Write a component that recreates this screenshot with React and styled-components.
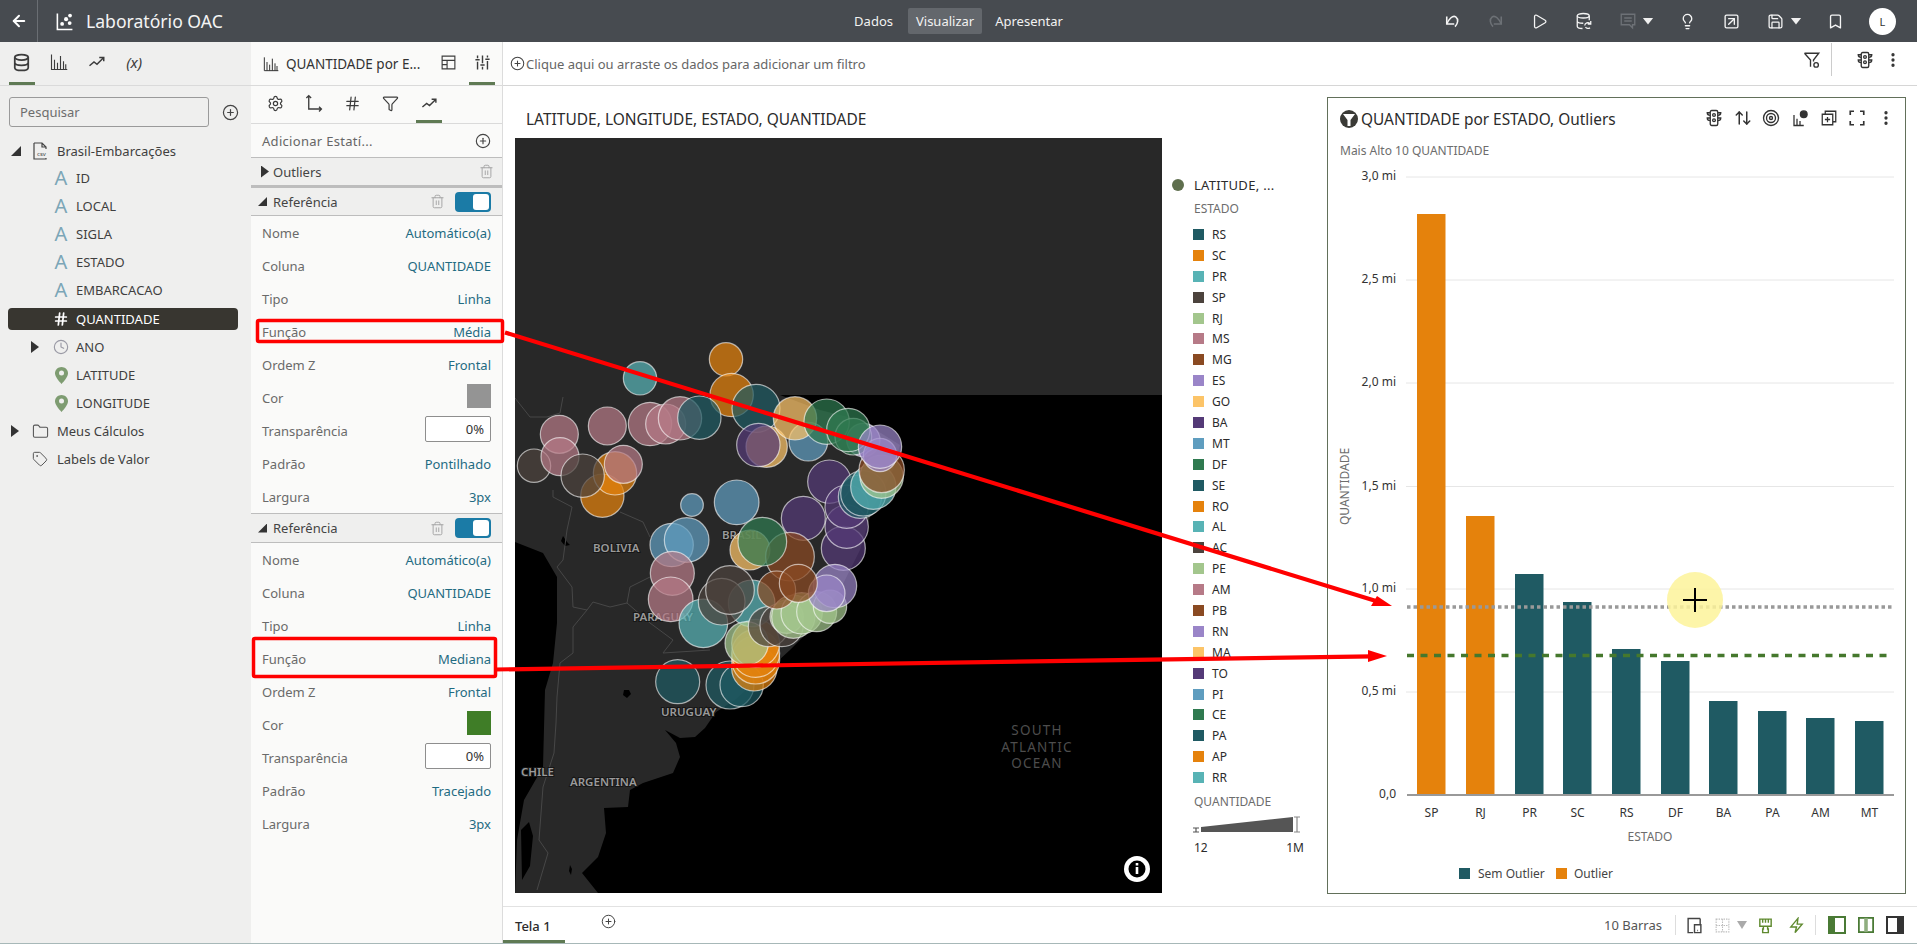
import React from "react";
import styled, { createGlobalStyle } from "styled-components";
import {
  ArrowLeft, CirclePlus, Settings, Hash, Funnel, Trash2, Clock, Folder, Tag,
  Play, Lightbulb, Bookmark, Save, SquareArrowUpRight, EllipsisVertical,
  ArrowUpDown, Target,
} from "lucide-react";

const Global = createGlobalStyle`
  html, body { margin: 0; padding: 0; height: 100%; overflow: hidden; background: #fff; }
  body { font-family: "Noto Sans", "Open Sans", sans-serif; font-size: 13px; color: #333; }
  * { box-sizing: border-box; }
`;

const Root = styled.div`
  position: relative; width: 1917px; height: 944px; display: flex; flex-direction: column;
  overflow: hidden; border-bottom: 1px solid #a7b8b8;
`;

/* ---------- header ---------- */
const Header = styled.header`
  height: 42px; flex: none; background: #474b50; color: #fff; display: flex; align-items: center;
`;
const HeaderLeft = styled.div`flex: 1 1 0; display: flex; align-items: center; height: 100%;`;
const BackButton = styled.div`
  width: 38px; height: 100%; display: flex; align-items: center; justify-content: center;
  border-right: 1px solid #6a6e73; color: #fff;
`;
const AppTitle = styled.h1`
  margin: 0 0 0 12px; font-size: 17.6px; font-weight: 400; color: #f4f4f4; white-space: nowrap;
`;
const LogoWrap = styled.span`margin-left: 17px; display: flex;`;
const Nav = styled.nav`display: flex; gap: 5px; flex: none;`;
const NavItem = styled.div`
  padding: 0 8px; height: 26px; line-height: 26px; font-size: 13px; border-radius: 2px; color: #f2f2f2;
  background: ${p => (p.$active ? "#63676c" : "transparent")};
  &:first-child { margin-right: 2px; }
`;
const HeaderRight = styled.div`
  flex: 1 1 0; display: flex; align-items: center; justify-content: flex-end;
`;
const HeaderBtn = styled.div`
  width: 44px; height: 30px; display: flex; align-items: center; justify-content: center;
  color: ${p => (p.$dim ? "#6d7176" : "#f5f5f5")};
`;
const HeaderCaret = styled.div`
  width: 11px; height: 7px; margin: 0 12px 0 -7px; background: #f0f0f0;
  clip-path: polygon(0 0, 100% 0, 50% 100%);
`;
const Avatar = styled.div`
  width: 27px; height: 27px; margin: 0 21px 0 11.5px; border-radius: 50%; background: #fff; color: #333;
  display: flex; align-items: center; justify-content: center; font-size: 11px;
`;

/* ---------- body ---------- */
const Body = styled.div`flex: 1; display: flex; min-height: 0;`;
const DataPanel = styled.aside`width: 251px; flex: none; background: #efefee; display: flex; flex-direction: column;`;
const PropsPanel = styled.aside`
  width: 252px; flex: none; background: #fafaf9; border-right: 1px solid #dcdcdc; display: flex; flex-direction: column;
`;
const TabBar = styled.div`
  height: 44px; flex: none; display: flex; align-items: center; border-bottom: 1px solid #dadada;
  padding-left: ${p => p.$pl || 0}px; position: relative;
`;
const IconTab = styled.div`
  position: relative; flex: none; width: ${p => p.$w || 37.5}px; height: 100%; display: flex; align-items: center; justify-content: center;
  color: #3c3c3c; padding-bottom: 3px;
  font-style: ${p => (p.$italic ? "italic" : "normal")}; font-size: ${p => (p.$italic ? 15 : 13)}px;
  &::after {
    content: ""; position: absolute; bottom: 0; height: 3px; left: 50%; width: 26px; margin-left: -13px;
    background: ${p => (p.$active ? "#5f7a54" : "transparent")};
  }
`;
const SearchRow = styled.div`display: flex; align-items: center; padding: 11px 0 10px 9px; gap: 13px;`;
const SearchBox = styled.div`
  width: 200px; height: 30px; border: 1px solid #9a9a9a; border-radius: 3px; padding-left: 10px;
  line-height: 28px; font-size: 13px; color: #6d6d6d;
`;
const FieldGroup = styled.div`display: flex; flex-direction: column; margin: -1px 0 1px;`;
const TreeRow = styled.div`
  width: 230px; height: 22px; margin: 3px 0 3px 8px; display: flex; align-items: center; border-radius: 4px;
  padding-left: ${p => (p.$deep ? 23 : 3)}px; font-size: 13px; color: ${p => (p.$selected ? "#fff" : "#3f3f3f")};
  background: ${p => (p.$selected ? "#383630" : "transparent")}; white-space: nowrap;
`;
const Caret = styled.span`
  width: ${p => (p.$open ? 10 : 8)}px; height: ${p => (p.$open ? 10 : 12)}px; flex: none; margin-right: ${p => (p.$open ? 2 : 4)}px;
  background: ${p => (p.$hidden ? "transparent" : "#333")};
  clip-path: ${p => (p.$open ? "polygon(100% 0, 100% 100%, 0 100%)" : "polygon(0 0, 100% 50%, 0 100%)")};
`;
const TreeIcon = styled.span`
  width: ${p => (p.$deep ? 33 : 34)}px; flex: none; display: flex; align-items: center; justify-content: center;
  padding-left: ${p => (p.$deep ? 3 : 0)}px; color: ${p => p.$color || "#555"};
`;
const TypeLetter = styled.span`font-size: 20px; line-height: 22px; color: #7ba6b7; font-weight: 400;`;

const PanelTitleIcon = styled.span`display: flex; flex: none;`;
const PanelTitle = styled.div`flex: none; width: 149px; margin-left: 7px; font-size: 13.5px; color: #333; white-space: nowrap;`;
const SubTabs = styled.div`
  height: 38px; flex: none; display: flex; align-items: center; border-bottom: 1px solid #dadada; padding-left: 5px;
`;
const StatRow = styled.div`
  height: 34px; flex: none; display: flex; align-items: center; justify-content: space-between;
  padding: 0 11px; color: #666; border-bottom: 1px solid #bdbdbd; font-size: 13px; letter-spacing: 0.3px;
`;
const SectionHead = styled.div`
  height: ${p => p.$h}px; flex: none; display: flex; align-items: center; padding: 0 11px; background: #efefee; color: #444;
  border-bottom: ${p => p.$bw || 1}px solid #bdbdbd; font-size: 13px;
  border-top: ${p => (p.$topLine ? "1px solid #bdbdbd" : "none")};
`;
const SectionCaret = styled(Caret)`
  width: ${p => (p.$open ? 9 : 8)}px; height: ${p => (p.$open ? 9 : 12)}px;
  margin: 0 ${p => (p.$open ? 6 : 2)}px 0 ${p => (p.$open ? -4 : -1)}px; background: #333;
`;
const SectionName = styled.span`flex: 1; margin-left: ${p => (p.$open ? 0 : 2)}px;`;
const TrashWrap = styled.span`display: flex; color: #a3a3a3; margin-right: ${p => p.$mr}px;`;
const Toggle = styled.div`
  width: 36px; height: 20px; border-radius: 4px; background: #1b7ba6; display: flex; justify-content: flex-end; padding: 2px;
  &::after { content: ""; width: 16px; height: 16px; border-radius: 3px; background: #fff; }
`;
const PropRow = styled.div`
  height: 33px; flex: none; display: flex; align-items: center; justify-content: space-between; padding: 0 11px;
  font-size: 13px; color: #6a6a6a;
`;
const PropValue = styled.span`color: #1f6b82;`;
const Swatch = styled.span`width: 24px; height: 24px; background: ${p => p.$c}; margin-top: -3px;`;
const PercentBox = styled.span`
  width: 66px; height: 26px; margin-top: -3px; border: 1px solid #8e8e8e; border-radius: 2px; background: #fff; color: #333;
  text-align: right; line-height: 24px; padding-right: 6px;
`;

/* ---------- main ---------- */
const Main = styled.main`flex: 1; min-width: 0; display: flex; flex-direction: column;`;
const FilterBar = styled.div`
  height: 44px; flex: none; display: flex; align-items: center; border-bottom: 1px solid #d6d6d6; padding-left: 7px; color: #666;
`;
const FilterText = styled.span`flex: 1; margin-left: 1px; font-size: 13px;`;
const FilterTail = styled.div`
  display: flex; align-items: center; height: 33px; margin-top: -8px; color: #333;
`;
const TailIcon = styled.span`
  display: flex; width: ${p => p.$w}px; justify-content: center; padding-left: ${p => p.$pl || 0}px;
  border-left: ${p => (p.$sep ? "1px solid #ccc" : "none")}; height: 33px; align-items: center;
`;
const Canvas = styled.div`flex: 1; min-height: 0; display: flex; padding: 11px 11px 12px 12px;`;
const MapViz = styled.section`flex: 1; min-width: 0; display: flex; flex-direction: column;`;
const VizTitle = styled.h2`
  margin: 0; height: 41px; padding: 12px 0 0 11px; font-size: 15.5px; line-height: 20px; font-weight: 400; color: #2b2b2b;
`;
const MapRow = styled.div`display: flex; flex: 1; min-height: 0;`;
const MapSvg = styled.svg`width: 647px; height: 755px; flex: none; display: block;`;
const Legend = styled.div`flex: 1; padding: 37px 0 0 10px; font-size: 12px; color: #2b2b2b;`;
const LegendTop = styled.div`display: flex; align-items: center; height: 20px; gap: 10px; font-size: 13px; letter-spacing: 0.3px;`;
const LegendDot = styled.span`width: 12px; height: 12px; border-radius: 50%; background: #5f6f4e;`;
const LegendHead = styled.div`height: 20px; line-height: 20px; margin-left: 22px; color: #6d6d6d; margin-top: ${p => p.$mt || 0}px;`;
const LegendItems = styled.ul`list-style: none; margin: 5px 0 0 21px; padding: 0;`;
const LegendItem = styled.li`display: flex; align-items: center; height: 20.9px; gap: 8px;`;
const LegendSwatch = styled.span`width: 11px; height: 11px; background: ${p => p.$c};`;
const SizeScale = styled.svg`display: block; width: 112px; height: 18px; margin: 3px 0 0 21px;`;
const SizeLabels = styled.div`display: flex; justify-content: space-between; width: 110px; margin: 6px 0 0 22px;`;

const ChartCard = styled.section`
  width: 579px; flex: none; border: 1px solid #62705a; display: flex; flex-direction: column; background: #fff;
`;
const ChartHead = styled.div`display: flex; align-items: center; height: 42px; padding: 0 5px 0 12px; color: #2b2b2b;`;
const ChartTitle = styled.h2`
  flex: 1; margin: 0 0 0 3px; font-size: 15.4px; font-weight: 400; white-space: nowrap;
`;
const ChartTool = styled.span`width: 28.6px; display: flex; justify-content: center; color: #333; margin-top: -3px;`;
const ChartSub = styled.div`height: 21px; padding-left: 12px; line-height: 21px; font-size: 12px; color: #6d6d6d;`;
const ChartSvg = styled.svg`flex: 1; min-height: 0; width: 577px; display: block;`;

const Footer = styled.footer`
  height: 37px; flex: none; display: flex; align-items: center; border-top: 1px solid #e2e2e2; color: #333;
`;
const SheetTab = styled.div`
  width: 62px; height: 36px; padding-left: 12px; line-height: 38px; font-size: 13px; font-weight: 500; color: #2b2b2b;
  border-bottom: 3px solid #5f7a54;
`;
const AddSheet = styled.span`display: flex; margin: -8px 0 0 36px; color: #444;`;
const FootSpacer = styled.div`flex: 1;`;
const BarCount = styled.span`font-size: 13px; color: #555; margin-right: 13px;`;
const FootDivider = styled.span`width: 1px; height: 20px; background: #ddd;`;
const FootIcon = styled.span`
  width: ${p => p.$w}px; flex: none; display: flex; justify-content: center; align-items: center; color: ${p => p.$c || "#444"};
`;

const Overlay = styled.svg`position: absolute; left: 0; top: 0; width: 1917px; height: 944px; pointer-events: none;`;

/* ---------- icons ---------- */
const Ico = ({ s = 18, vb = 24, sw = 1.6, children, ...r }) => (
  <svg width={s} height={s} viewBox={`0 0 ${vb} ${vb}`} fill="none" stroke="currentColor" strokeWidth={sw} {...r}>{children}</svg>
);
const LogoIcon = () => (
  <Ico s={19} sw={2}>
    <path d="M3 2v20h19" />
    <circle cx="9" cy="15" r="2.4" fill="currentColor" stroke="none" />
    <circle cx="14" cy="9" r="2.6" fill="currentColor" stroke="none" />
    <circle cx="19" cy="4.5" r="2.4" fill="currentColor" stroke="none" />
    <circle cx="18.5" cy="14" r="2.4" fill="currentColor" stroke="none" />
  </Ico>
);
const BarsIcon = ({ s = 18 }) => (
  <Ico s={s} sw={1.5}>
    <path d="M2 2v20h21M6 22V9M10 22V13M14 22V4M18 22V11M21 22V15" />
  </Ico>
);
const DbIcon = () => (
  <Ico s={19} sw={2.2}>
    <ellipse cx="12" cy="5.5" rx="8.5" ry="3.5" />
    <path d="M3.5 5.5v13c0 2 3.8 3.5 8.5 3.5s8.5-1.5 8.5-3.5v-13M3.5 12c0 2 3.8 3.5 8.5 3.5s8.5-1.5 8.5-3.5" />
  </Ico>
);
const TrendIcon = ({ s = 18 }) => (
  <Ico s={s} sw={2}>
    <path d="M2 17l6-5 4 3 8-8M15 6h6v5" />
  </Ico>
);
const PanelIcon = () => (
  <Ico s={17} sw={1.6}>
    <path d="M3 3h18v18H3zM3 9h18M10 9v12M3 15h7" />
  </Ico>
);
const SlidersIcon = () => (
  <Ico s={17} sw={2}>
    <path d="M5 2v4M5 11v11M12 2v11M12 18v4M19 2v3M19 10v12M2 8h6M9 15.5h6M16 7.5h6" />
  </Ico>
);
const AxisIcon = () => (
  <Ico s={19} sw={1.7}>
    <path d="M6 2v17h16M3 5l3-3 3 3M19 16l3 3-3 3" />
  </Ico>
);
const CsvIcon = () => (
  <svg width="17" height="18" viewBox="0 0 17 18" fill="none" stroke="#444" strokeWidth="1.2">
    <path d="M2 1h8l4 4v2M2 1v16h12v-1M10 1v4h4" />
    <text x="5" y="14" fontSize="6" fill="#444" stroke="none" fontFamily="Noto Sans">csv</text>
  </svg>
);
const PinIcon = () => (
  <svg width="13" height="17" viewBox="0 0 13 17">
    <path d="M6.5 0C3 0 0 2.8 0 6.3 0 10.5 6.5 17 6.5 17S13 10.5 13 6.3C13 2.8 10 0 6.5 0z" fill="#7e9c71" />
    <circle cx="6.5" cy="6" r="2.5" fill="#efefee" />
  </svg>
);
const UndoIcon = ({ flip }) => (
  <Ico s={18} sw={2.1} transform={flip ? "scale(-1 1)" : undefined}>
    <path d="M5 6v10h10" />
    <path d="M5 16C8 9 13 4 17 6.500c4 3 3 9-1 13" />
  </Ico>
);
const DbRefreshIcon = () => (
  <Ico s={18} sw={1.7}>
    <ellipse cx="11" cy="5" rx="8" ry="3" />
    <path d="M3 5v14c0 1.6 3 3 7 3M19 5v6M3 12c0 1.6 3.4 3 8 3" />
    <path d="M13 18a4 4 0 017-2.500M21 12v4h-4M20 21a4 4 0 01-6-1" />
  </Ico>
);
const CommentIcon = () => (
  <Ico s={18} sw={1.8}>
    <path d="M3 3h18v14l-3 0v4l-4-4H3zM7 8h10M7 12h10" />
  </Ico>
);
const TrafficIcon = ({ s = 18 }) => (
  <Ico s={s} sw={1.8}>
    <rect x="7" y="2" width="10" height="20" rx="2" />
    <circle cx="12" cy="8" r="1.800" />
    <circle cx="12" cy="15" r="1.800" />
    <path d="M7 5H3c0 2 2 3.500 4 3.500M17 5h4c0 2-2 3.500-4 3.500M7 12H3c0 2 2 3.500 4 3.500M17 12h4c0 2-2 3.500-4 3.500" />
  </Ico>
);
const FilterGearIcon = () => (
  <Ico s={18} sw={1.8}>
    <path d="M2 3h19l-7 9v2M2 3l8 9v9" />
    <circle cx="17.500" cy="18.500" r="3" />
  </Ico>
);
const FunnelBadge = () => (
  <svg width="18" height="18" viewBox="0 0 18 18">
    <circle cx="9" cy="9" r="9" fill="#3a3a36" />
    <path d="M3 4h12L10.500 10v6h-3v-6z" fill="#fff" />
  </svg>
);
const ChartPieIcon = () => (
  <Ico s={18} sw={1.7}>
    <path d="M4 8v14h13M8 22v-9M12 22v-6" />
    <circle cx="17" cy="7" r="4.500" fill="currentColor" />
  </Ico>
);
const CopyPlusIcon = () => (
  <Ico s={18} sw={1.7}>
    <path d="M3 7h14v14H3zM7 7V3h14v14h-4M10 10.500v7M6.500 14h7" />
  </Ico>
);
const CornersIcon = () => (
  <Ico s={18} sw={2.2}>
    <path d="M3 8V3h5M16 3h5v5M21 16v5h-5M8 21H3v-5" />
  </Ico>
);
const DeviceIcon = () => (
  <Ico s={17} sw={2}>
    <path d="M20 2H3v20h7M20 2v9M12 11h9v11h-9zM16 19h1" />
  </Ico>
);
const GridDimIcon = () => (
  <Ico s={17} sw={1.5}>
    <path d="M3 3h18v18H3zM12 3v18M3 12h18" strokeDasharray="2 1.500" />
  </Ico>
);
const BrushIcon = () => (
  <Ico s={17} sw={2}>
    <path d="M4 3h16v10H4zM8 3v5M12 3v5M16 3v5M4 13h16M9 13v4h-1v5h8v-5h-1v-4" />
  </Ico>
);
const BoltIcon = () => (
  <Ico s={17} sw={2}>
    <path d="M14 2L4 14h8l-2 8 10-12h-7z" />
  </Ico>
);
const LayoutIcon = ({ kind }) => (
  <svg width="18" height="18" viewBox="0 0 18 18">
    <rect x="1" y="1" width="16" height="16" fill="#fff" stroke={kind === "r" ? "#333" : "#4a7a35"} strokeWidth="2" />
    {kind === "l" && <rect x="1" y="1" width="6" height="16" fill="#4a7a35" />}
    {kind === "c" && <rect x="7" y="1" width="4" height="16" fill="#8fae7f" />}
    {kind === "r" && <rect x="11" y="1" width="6" height="16" fill="#333" />}
  </svg>
);
const CaretDim = () => (
  <svg width="10" height="8" viewBox="0 0 10 8"><path d="M0 0h10L5 8z" fill="currentColor" /></svg>
);

/* ---------- data ---------- */
const C = {
  RS: "#1f5a63", SC: "#e5820c", PR: "#58b3b5", SP: "#4c433d", RJ: "#a3c68d", MS: "#b67a87",
  MG: "#8a4a22", ES: "#9a85c8", GO: "#fcc468", BA: "#543a77", MT: "#5f9dbf", DF: "#2f7a50",
};
const colorCycle = [C.RS, C.SC, C.PR, C.SP, C.RJ, C.MS, C.MG, C.ES, C.GO, C.BA, C.MT, C.DF];
const states = ["RS","SC","PR","SP","RJ","MS","MG","ES","GO","BA","MT","DF","SE","RO","AL","AC","PE","AM","PB","RN","MA","TO","PI","CE","PA","AP","RR"];

const bubbles = [
  [648,88,50,C.SC],[390,145,50,C.PR],[665,195,65,C.SC],[738,235,72,C.RS],[770,350,62,C.GO],[745,345,65,C.BA],
  [895,335,58,C.MT],[855,265,65,C.GO],[950,275,68,C.DF],[1060,330,50,C.ES],[1030,320,55,C.DF],[1015,300,65,C.DF],
  [420,282,65,C.MS],[467,282,60,C.MS],[510,265,65,C.MS],[568,263,65,C.RS],[292,288,57,C.MS],
  [148,313,57,C.MS],[72,407,50,C.SP],[150,380,57,C.MS],[277,497,65,C.SC],[315,430,65,C.SC],[218,437,65,C.SP],[340,403,57,C.MS],
  [958,455,65,C.BA],[1000,655,66,C.BA],[1010,590,65,C.BA],[1010,530,65,C.BA],[880,565,66,C.BA],
  [1050,500,65,C.RS],[1060,490,68,C.RS],[1090,470,68,C.PR],[1115,440,65,C.RJ],[1115,420,68,C.MG],[1110,375,50,C.ES],[1110,350,65,C.ES],
  [680,517,67,C.MT],[546,525,34,C.MT],[720,660,60,C.GO],[840,680,73,C.MG],[757,635,73,C.DF],
  [485,645,65,C.MT],[530,630,67,C.MT],[487,730,66,C.MS],[482,808,67,C.MS],
  [503,1055,66,C.RS],[660,1065,72,C.RS],[695,1065,65,C.RS],
  [733,1015,68,C.SC],[737,990,72,C.SC],[737,970,72,C.SC],[737,940,72,C.SC],
  [725,820,70,C.PR],[580,880,73,C.PR],[710,940,65,C.RJ],[775,890,60,C.SP],[815,885,65,C.SP],[635,815,70,C.SP],[660,780,73,C.SP],
  [830,860,50,C.RJ],[850,860,65,C.RJ],[875,850,62,C.RJ],[920,845,60,C.RJ],[960,830,50,C.RJ],
  [975,768,65,C.ES],[950,790,55,C.ES],[800,780,57,C.MG],[865,760,57,C.MG],
];

const bars = [
  ["SP",1417,214,"o"],["RJ",1466,516,"o"],["PR",1515,574],["SC",1563,602],["RS",1612,649],
  ["DF",1661,661],["BA",1709,701],["PA",1758,711],["AM",1806,718],["MT",1855,721],
];
const gridY = [[177,"3,0 mi"],[280,"2,5 mi"],[383,"2,0 mi"],[486.5,"1,5 mi"],[589,"1,0 mi"],[692,"0,5 mi"]];

const fields = ["ID","LOCAL","SIGLA","ESTADO","EMBARCACAO"];

const RefSection = ({ func, color, pattern, second }) => (
  <>
    <SectionHead $h={second ? 30 : 28} $topLine={second}>
      <SectionCaret $open />
      <SectionName $open>Referência</SectionName>
      <TrashWrap $mr={10}><Trash2 size={15} strokeWidth={1.5} /></TrashWrap>
      <Toggle />
    </SectionHead>
    <PropRow>Nome<PropValue>Automático(a)</PropValue></PropRow>
    <PropRow>Coluna<PropValue>QUANTIDADE</PropValue></PropRow>
    <PropRow>Tipo<PropValue>Linha</PropValue></PropRow>
    <PropRow>Função<PropValue>{func}</PropValue></PropRow>
    <PropRow>Ordem Z<PropValue>Frontal</PropValue></PropRow>
    <PropRow>Cor<Swatch $c={color} /></PropRow>
    <PropRow>Transparência<PercentBox>0%</PercentBox></PropRow>
    <PropRow>Padrão<PropValue>{pattern}</PropValue></PropRow>
    <PropRow>Largura<PropValue>3px</PropValue></PropRow>
  </>
);

const MapDrawing = () => (
  <MapSvg viewBox="515 138 647 755">
    <rect x="515" y="138" width="647" height="755" fill="#282828" />
    <path fill="#000" d="M780 395H1162V893H598L582 873 598 857 606 833 604 808 628 807 630 790 643 783 673 773 680 757 676 743 665 730 680 738 695 737 705 728 716 712 735 700 790 650 815 625 840 590 860 550 872 510 893 470 900 445 860 420 820 410Z" />
    <path fill="#000" d="M515 542L543 553 557 577 557 623 553 663 545 690 543 767 524 800 517 840 515 893Z" />
    <path fill="#000" d="M563 536l4 6 3 3-5 1-4-5zM624 690l5 0 2 4-4 4-4-3zM521 830l8-8 4 14-3 30-8 14zM570 865l2 4-1 6-2-4z" />
    <g fill="none" stroke="#474747" strokeWidth="1">
      <path d="M515 398L530 417 547 417 560 413 563 397" />
      <path d="M553 490L553 497 572 507 567 530 563 560 557 567 572 587 573 607 587 610 593 602 610 607 627 603 630 587 650 577" />
      <path d="M620 512L643 522 650 537" />
      <path d="M587 610L573 627 573 653 560 663 557 697 556 723 554 753 543 787 539 840 548 853 537 890" />
      <path d="M627 603L650 623 673 640 663 653 710 650" />
    </g>
    <g fontFamily="Noto Sans" fontWeight="600" fontSize="11.5" fill="#9a9a9a" stroke="#161616" strokeWidth="2" paintOrder="stroke">
      <text x="593" y="552">BOLIVIA</text>
      <text x="722" y="539">BRASIL</text>
      <text x="633" y="621">PARAGUAY</text>
      <text x="661" y="716">URUGUAY</text>
      <text x="521" y="776">CHILE</text>
      <text x="570" y="786">ARGENTINA</text>
    </g>
    <g fontFamily="Noto Sans" fontSize="13.5" fill="#4d4d4d" textAnchor="middle" letterSpacing="1.2">
      <text x="1037" y="735">SOUTH</text>
      <text x="1037" y="751.5">ATLANTIC</text>
      <text x="1037" y="768">OCEAN</text>
    </g>
    {bubbles.map(([x, y, r, c], i) => (
      <circle key={i} cx={510 + x / 3} cy={330 + y / 3} r={r / 3} fill={c} fillOpacity="0.72" stroke="#fff" strokeOpacity="0.6" strokeWidth="1.2" />
    ))}
    <circle cx="1137" cy="869" r="13" fill="#fff" />
    <circle cx="1137" cy="869" r="8.5" fill="#000" />
    <path d="M1137 863v2.4M1137 867v7" stroke="#fff" strokeWidth="2.6" />
  </MapSvg>
);

const BarChart = () => (
  <ChartSvg viewBox="1328 161 577 732">
    {gridY.map(([y, t]) => (
      <g key={t}>
        <line x1="1406" x2="1894" y1={y} y2={y} stroke="#e6e6e6" />
        <text x="1396" y={y + 3} textAnchor="end" fontFamily="Noto Sans" fontSize="12" fill="#333">{t}</text>
      </g>
    ))}
    <text x="1396" y="798" textAnchor="end" fontFamily="Noto Sans" fontSize="12" fill="#333">0,0</text>
    <text transform="translate(1349 486.5) rotate(-90)" textAnchor="middle" fontFamily="Noto Sans" fontSize="12" fill="#6d6d6d">QUANTIDADE</text>
    {bars.map(([name, x, top, o]) => (
      <g key={name}>
        <rect x={x} y={top} width="28.5" height={795 - top} fill={o ? "#e5820c" : "#1f5a63"} />
        <text x={x + 14.5} y="817" textAnchor="middle" fontFamily="Noto Sans" fontSize="12" fill="#333">{name}</text>
      </g>
    ))}
    <line x1="1407" x2="1894" y1="795" y2="795" stroke="#999" strokeWidth="2" />
    <line x1="1407" x2="1893" y1="607" y2="607" stroke="#999" strokeWidth="3.5" strokeDasharray="3.5 3" />
    <line x1="1407" x2="1890" y1="655.5" y2="655.5" stroke="#45782d" strokeWidth="3.5" strokeDasharray="7 6.5" />
    <text x="1650" y="841" textAnchor="middle" fontFamily="Noto Sans" fontSize="12" fill="#6d6d6d">ESTADO</text>
    <rect x="1459" y="868" width="11" height="11" fill="#1f5a63" />
    <text x="1478" y="878" fontFamily="Noto Sans" fontSize="12" fill="#444">Sem Outlier</text>
    <rect x="1556" y="868" width="11" height="11" fill="#e5820c" />
    <text x="1574" y="878" fontFamily="Noto Sans" fontSize="12" fill="#444">Outlier</text>
    <circle cx="1695" cy="600" r="28" fill="#fdf39a" fillOpacity="0.85" />
    <path d="M1683 600h24M1695 588v24" stroke="#000" strokeWidth="2" />
  </ChartSvg>
);

export default function App() {
  return (
    <Root>
      <Global />
      <Header>
        <HeaderLeft>
          <BackButton><ArrowLeft size={18} strokeWidth={2.6} /></BackButton>
          <LogoWrap><LogoIcon /></LogoWrap>
          <AppTitle>Laboratório OAC</AppTitle>
        </HeaderLeft>
        <Nav>
          <NavItem>Dados</NavItem>
          <NavItem $active>Visualizar</NavItem>
          <NavItem>Apresentar</NavItem>
        </Nav>
        <HeaderRight>
          <HeaderBtn><UndoIcon /></HeaderBtn>
          <HeaderBtn $dim><UndoIcon flip /></HeaderBtn>
          <HeaderBtn><Play size={17} strokeWidth={1.8} /></HeaderBtn>
          <HeaderBtn><DbRefreshIcon /></HeaderBtn>
          <HeaderBtn $dim><CommentIcon /></HeaderBtn>
          <HeaderCaret />
          <HeaderBtn><Lightbulb size={17} strokeWidth={1.9} /></HeaderBtn>
          <HeaderBtn><SquareArrowUpRight size={17} strokeWidth={1.9} /></HeaderBtn>
          <HeaderBtn><Save size={17} strokeWidth={1.8} /></HeaderBtn>
          <HeaderCaret />
          <HeaderBtn><Bookmark size={17} strokeWidth={1.9} /></HeaderBtn>
          <Avatar>L</Avatar>
        </HeaderRight>
      </Header>

      <Body>
        <DataPanel>
          <TabBar $pl={3}>
            <IconTab $active><DbIcon /></IconTab>
            <IconTab><BarsIcon /></IconTab>
            <IconTab><TrendIcon /></IconTab>
            <IconTab $italic>(x)</IconTab>
          </TabBar>
          <SearchRow>
            <SearchBox>Pesquisar</SearchBox>
            <CirclePlus size={17} strokeWidth={1.7} color="#444" />
          </SearchRow>
          <TreeRow>
            <Caret $open />
            <TreeIcon><CsvIcon /></TreeIcon>
            Brasil-Embarcações
          </TreeRow>
          <FieldGroup>
            {fields.map(f => (
              <TreeRow $deep key={f}>
                <Caret $hidden />
                <TreeIcon $deep><TypeLetter>A</TypeLetter></TreeIcon>
                {f}
              </TreeRow>
            ))}
          </FieldGroup>
          <TreeRow $deep $selected>
            <Caret $hidden />
            <TreeIcon $deep $color="#fff"><Hash size={16} strokeWidth={2.6} /></TreeIcon>
            QUANTIDADE
          </TreeRow>
          <TreeRow $deep>
            <Caret />
            <TreeIcon $deep $color="#9a9aa5"><Clock size={16} strokeWidth={1.7} /></TreeIcon>
            ANO
          </TreeRow>
          <TreeRow $deep>
            <Caret $hidden />
            <TreeIcon $deep><PinIcon /></TreeIcon>
            LATITUDE
          </TreeRow>
          <TreeRow $deep>
            <Caret $hidden />
            <TreeIcon $deep><PinIcon /></TreeIcon>
            LONGITUDE
          </TreeRow>
          <TreeRow>
            <Caret />
            <TreeIcon><Folder size={17} strokeWidth={1.5} /></TreeIcon>
            Meus Cálculos
          </TreeRow>
          <TreeRow>
            <Caret $hidden />
            <TreeIcon><Tag size={16} strokeWidth={1.5} /></TreeIcon>
            Labels de Valor
          </TreeRow>
        </DataPanel>

        <PropsPanel>
          <TabBar $pl={12}>
            <PanelTitleIcon><BarsIcon s={16} /></PanelTitleIcon>
            <PanelTitle>QUANTIDADE por E...</PanelTitle>
            <IconTab $w={26}><PanelIcon /></IconTab>
            <IconTab $w={42} $active><SlidersIcon /></IconTab>
          </TabBar>
          <SubTabs>
            <IconTab $w={38.5}><Settings size={17} strokeWidth={1.7} /></IconTab>
            <IconTab $w={38.5}><AxisIcon /></IconTab>
            <IconTab $w={38.5}><Hash size={17} strokeWidth={1.7} /></IconTab>
            <IconTab $w={38.5}><Funnel size={17} strokeWidth={1.7} /></IconTab>
            <IconTab $w={38.5} $active><TrendIcon s={17} /></IconTab>
          </SubTabs>
          <StatRow>Adicionar Estatí...<CirclePlus size={16} strokeWidth={1.7} color="#444" /></StatRow>
          <SectionHead $h={30} $bw={3}>
            <SectionCaret />
            <SectionName>Outliers</SectionName>
            <TrashWrap $mr={-3}><Trash2 size={15} strokeWidth={1.5} /></TrashWrap>
          </SectionHead>
          <RefSection func="Média" color="#949494" pattern="Pontilhado" />
          <RefSection func="Mediana" color="#3f7d27" pattern="Tracejado" second />
        </PropsPanel>

        <Main>
          <FilterBar>
            <CirclePlus size={15} strokeWidth={1.7} color="#444" />
            <FilterText>Clique aqui ou arraste os dados para adicionar um filtro</FilterText>
            <FilterTail>
              <TailIcon $w={38}><FilterGearIcon /></TailIcon>
              <TailIcon $w={52} $pl={14} $sep><TrafficIcon s={18} /></TailIcon>
              <TailIcon $w={20}><EllipsisVertical size={18} strokeWidth={2.4} /></TailIcon>
              <TailIcon $w={14} />
            </FilterTail>
          </FilterBar>
          <Canvas>
            <MapViz>
              <VizTitle>LATITUDE, LONGITUDE, ESTADO, QUANTIDADE</VizTitle>
              <MapRow>
                <MapDrawing />
                <Legend>
                  <LegendTop><LegendDot />LATITUDE, ...</LegendTop>
                  <LegendHead $mt={4}>ESTADO</LegendHead>
                  <LegendItems>
                    {states.map((s, i) => (
                      <LegendItem key={s}>
                        <LegendSwatch $c={colorCycle[i % 12]} />
                        {s}
                      </LegendItem>
                    ))}
                  </LegendItems>
                  <LegendHead $mt={4}>QUANTIDADE</LegendHead>
                  <SizeScale viewBox="0 0 112 18">
                    <path d="M0 13h6M0 17h6M3 13v4" stroke="#555" strokeWidth="1.2" />
                    <path d="M8 12L100 2V17H8z" fill="#555" />
                    <path d="M101 2h6M101 17h6M104 2v15" stroke="#888" strokeWidth="1.2" />
                  </SizeScale>
                  <SizeLabels><span>12</span><span>1M</span></SizeLabels>
                </Legend>
              </MapRow>
            </MapViz>
            <ChartCard>
              <ChartHead>
                <FunnelBadge />
                <ChartTitle>QUANTIDADE por ESTADO, Outliers</ChartTitle>
                <ChartTool><TrafficIcon s={18} /></ChartTool>
                <ChartTool><ArrowUpDown size={18} strokeWidth={2} /></ChartTool>
                <ChartTool><Target size={18} strokeWidth={1.8} /></ChartTool>
                <ChartTool><ChartPieIcon /></ChartTool>
                <ChartTool><CopyPlusIcon /></ChartTool>
                <ChartTool><CornersIcon /></ChartTool>
                <ChartTool><EllipsisVertical size={18} strokeWidth={2.4} /></ChartTool>
              </ChartHead>
              <ChartSub>Mais Alto 10 QUANTIDADE</ChartSub>
              <BarChart />
            </ChartCard>
          </Canvas>
          <Footer>
            <SheetTab>Tela 1</SheetTab>
            <AddSheet><CirclePlus size={15} strokeWidth={1.6} /></AddSheet>
            <FootSpacer />
            <BarCount>10 Barras</BarCount>
            <FootDivider />
            <FootIcon $w={37}><DeviceIcon /></FootIcon>
            <FootIcon $w={18} $c="#bbb"><GridDimIcon /></FootIcon>
            <FootIcon $w={22} $c="#aaa"><CaretDim /></FootIcon>
            <FootIcon $w={24} $c="#5f8a2f"><BrushIcon /></FootIcon>
            <FootIcon $w={38} $c="#5f8a2f"><BoltIcon /></FootIcon>
            <FootDivider />
            <FootIcon $w={42}><LayoutIcon kind="l" /></FootIcon>
            <FootIcon $w={16}><LayoutIcon kind="c" /></FootIcon>
            <FootIcon $w={42}><LayoutIcon kind="r" /></FootIcon>
            <FootIcon $w={1} />
          </Footer>
        </Main>
      </Body>

      <Overlay viewBox="0 0 1917 944">
        <g fill="none" stroke="#ff0000" strokeWidth="3.5">
          <rect x="257.5" y="320.5" width="245" height="21" rx="1.5" />
          <rect x="253.5" y="638.5" width="242" height="38" rx="1.5" />
        </g>
        <g stroke="#ff0000" strokeWidth="4.2" fill="#ff0000">
          <line x1="505" y1="332.5" x2="1376" y2="601" />
          <line x1="495" y1="669.5" x2="1372" y2="656.3" />
        </g>
        <path d="M1392 606L1371 606 1377 596Z" fill="#ff0000" />
        <path d="M1387 656L1368 650 1368 662Z" fill="#ff0000" />
      </Overlay>
    </Root>
  );
}
